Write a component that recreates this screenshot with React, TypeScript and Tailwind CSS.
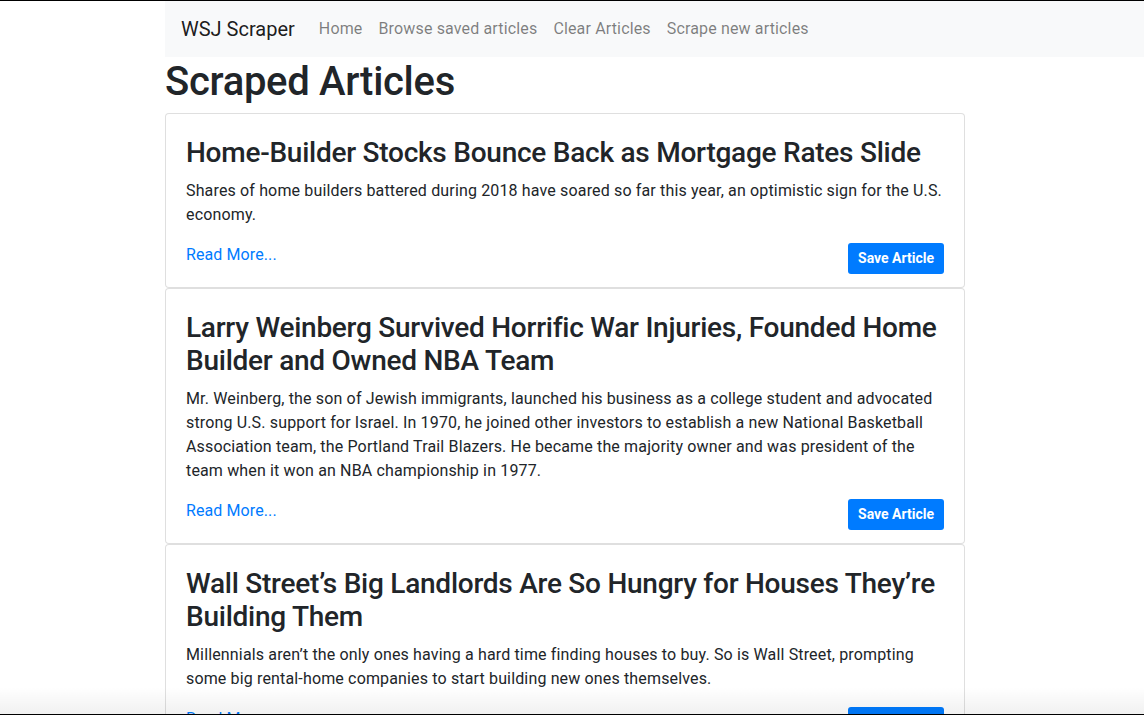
import React from "react";

const articles = [
  {
    title: "Home-Builder Stocks Bounce Back as Mortgage Rates Slide",
    summary:
      "Shares of home builders battered during 2018 have soared so far this year, an optimistic sign for the U.S. economy.",
  },
  {
    title: "Larry Weinberg Survived Horrific War Injuries, Founded Home Builder and Owned NBA Team",
    summary:
      "Mr. Weinberg, the son of Jewish immigrants, launched his business as a college student and advocated strong U.S. support for Israel. In 1970, he joined other investors to establish a new National Basketball Association team, the Portland Trail Blazers. He became the majority owner and was president of the team when it won an NBA championship in 1977.",
  },
  {
    title: "Wall Street\u2019s Big Landlords Are So Hungry for Houses They\u2019re Building Them",
    summary:
      "Millennials aren\u2019t the only ones having a hard time finding houses to buy. So is Wall Street, prompting some big rental-home companies to start building new ones themselves.",
  },
];

export default function App() {
  return (
    <div
      className="relative h-[715px] w-[1144px] overflow-hidden border-t border-black bg-white text-[#212529]"
      style={{ fontFamily: "Roboto, 'Noto Sans', 'Liberation Sans', sans-serif" }}
    >
      <div className="ml-[165px]">
        <nav className="flex h-14 items-center bg-[#f8f9fa] px-4">
          <span className="mr-4 text-[20px] leading-[30px] text-black/90">WSJ Scraper</span>
          <div className="flex text-[16px] leading-6 tracking-[0.15px] text-black/50">
            <span className="px-2">Home</span>
            <span className="px-2">Browse saved articles</span>
            <span className="px-2">Clear Articles</span>
            <span className="px-2">Scrape new articles</span>
          </div>
        </nav>
        <div className="w-[800px]">
          <h1 className="mb-2 pt-[2px] text-[40px] font-medium leading-[46px] tracking-[-0.3px]">Scraped Articles</h1>
          <div className="flex flex-col">
            {articles.map((a) => (
              <div key={a.title} className="rounded border border-black/[0.125] bg-white p-5">
                <h3 className="mb-3 pt-[2px] text-[28px] font-medium leading-[33.1px] tracking-[-0.25px]">
                  {a.title}
                </h3>
                <p className="-mt-[2px] mb-4 text-[16px] leading-6 tracking-[0.15px]">{a.summary}</p>
                <div className="flex h-6 items-start justify-between">
                  <a className="text-[16px] leading-6 tracking-[0.1px] text-[#007bff]">Read More...</a>
                  <button className="h-[31px] rounded-[3px] bg-[#007bff] px-[10px] text-[14px] font-bold leading-[21px] text-white">
                    Save Article
                  </button>
                </div>
              </div>
            ))}
          </div>
        </div>
      </div>
      <div className="pointer-events-none absolute bottom-0 left-0 right-0 h-[28px] bg-gradient-to-b from-transparent to-black/[0.06]" />
      <div className="absolute bottom-0 left-0 right-0 h-px bg-black" />
    </div>
  );
}
